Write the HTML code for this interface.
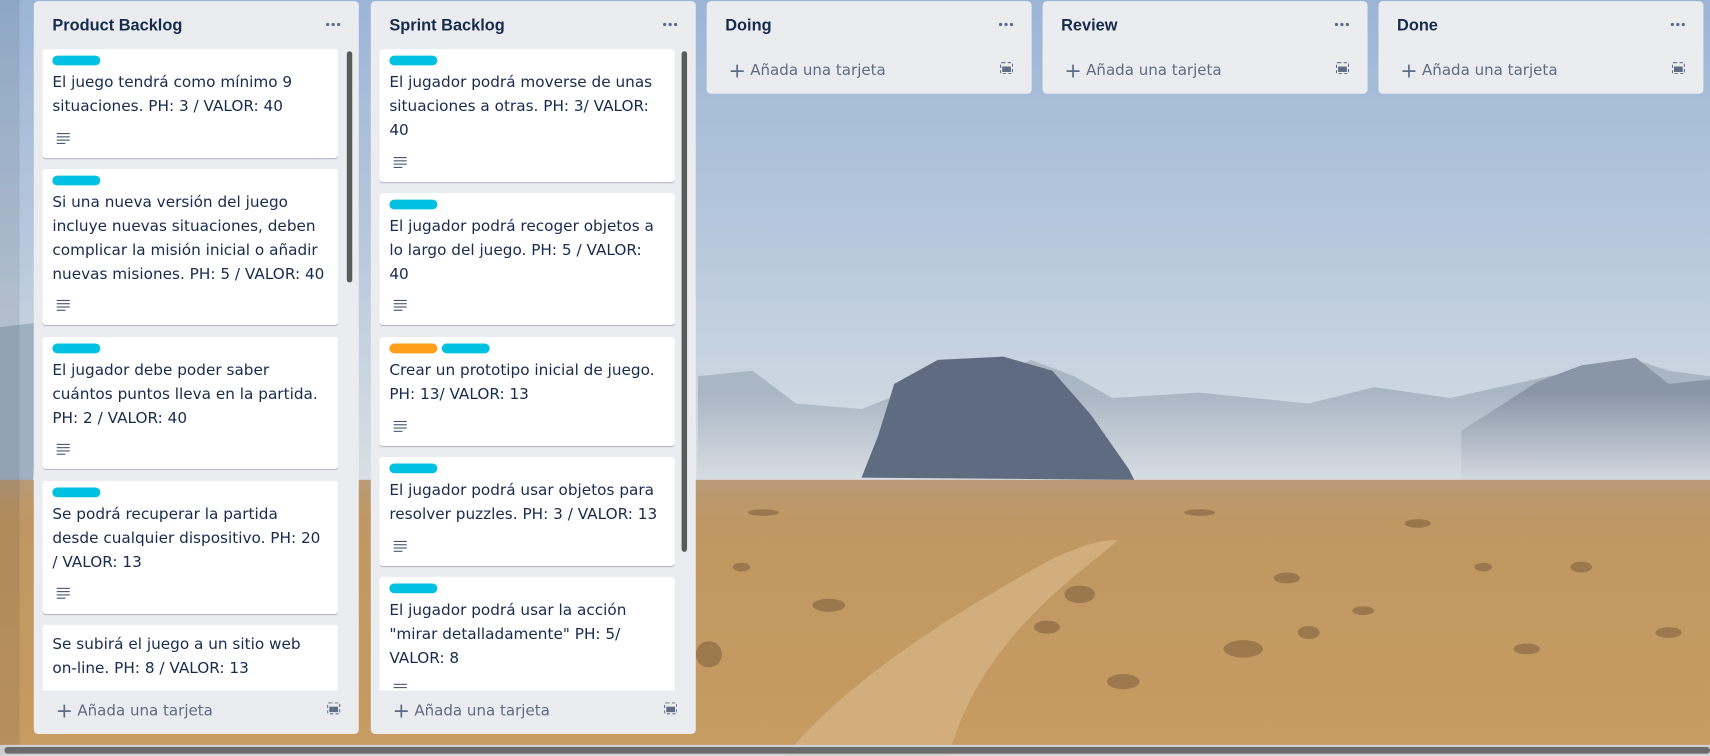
<!DOCTYPE html>
<html><head><meta charset="utf-8"><style>
html,body{margin:0;padding:0;width:1710px;height:756px;overflow:hidden;}
#w{position:absolute;left:0;top:0;width:1568px;height:693px;transform:scale(1.09056);transform-origin:0 0;overflow:hidden;font-family:"Liberation Sans","DejaVu Sans",sans-serif;}
.bg{position:absolute;inset:0;}
.list{position:absolute;top:1px;width:298px;background:#ebecf0;border-radius:4px;}
.hd{position:absolute;left:17px;top:14px;font-weight:bold;font-size:15px;color:#172b4d;}
.dots{position:absolute;right:15px;top:20px;width:15px;height:3px;}
.dots i{float:left;width:3px;height:3px;border-radius:50%;background:#5e6c84;margin-right:2px;}
.add{position:absolute;left:20px;font-family:"DejaVu Sans",sans-serif;font-size:13.8px;color:#5e6c84;}
.add b{font-weight:normal;font-size:19px;position:relative;top:2px;margin-right:4px;}
.tpl{position:absolute;right:17px;width:12px;height:11px;border:1.5px dashed #5e6c84;border-radius:2px;box-sizing:border-box;}
.tpl:after{content:"";position:absolute;left:1px;right:1px;top:3px;bottom:1px;background:#5e6c84;}
.card{position:absolute;left:8px;width:271px;background:#fff;border-radius:3px;box-shadow:0 1px 0 #091e4240;}
.lab{position:absolute;top:6px;height:9px;width:44px;border-radius:5px;background:#00c2e0;}
.tx{position:absolute;left:9px;font-family:"DejaVu Sans",sans-serif;font-size:14px;line-height:22px;color:#172b4d;white-space:nowrap;}
.ic{position:absolute;left:13px;width:12px;height:10px;}
.ic i{display:block;height:1px;background:#42526e;margin-bottom:2px;}
.ic i:last-child{width:8px;}
.clip{position:absolute;left:0;top:44px;width:298px;height:588px;overflow:hidden;}
.sb{position:absolute;width:5px;border-radius:3px;background:#5b5b5b;}
</style></head><body><div id="w">
<svg class="bg" width="1568" height="693" viewBox="0 0 1568 693">
<defs>
<linearGradient id="sky" x1="0" y1="0" x2="0" y2="1"><stop offset="0" stop-color="#9bb5d6"/><stop offset="0.5" stop-color="#b7c8dc"/><stop offset="1" stop-color="#d8dfe4"/></linearGradient>
<linearGradient id="gr" x1="0" y1="0" x2="0" y2="1"><stop offset="0" stop-color="#b89a78"/><stop offset="0.15" stop-color="#bf9762"/><stop offset="1" stop-color="#c79c62"/></linearGradient>
<linearGradient id="hz" x1="0" y1="0" x2="0" y2="1"><stop offset="0" stop-color="#dfe4e8" stop-opacity="0"/><stop offset="1" stop-color="#dfe4e8" stop-opacity="0.9"/></linearGradient>
</defs>
<rect width="1568" height="445" fill="url(#sky)"/>
<path d="M640 345 L690 340 L730 370 L790 375 L840 355 L880 365 L945 330 L985 345 L1020 365 L1100 360 L1200 370 L1260 355 L1330 365 L1420 345 L1500 330 L1530 340 L1568 345 L1568 445 L640 445Z" fill="#a9b6c4"/>
<path d="M1340 395 L1410 350 L1450 335 L1500 328 L1530 352 L1568 348 L1568 445 L1340 445Z" fill="#8996a8"/>
<rect x="640" y="360" width="928" height="85" fill="url(#hz)"/>
<path d="M790 438 L805 400 L820 352 L860 330 L920 327 L965 340 L1000 380 L1035 430 L1040 440 Z" fill="#5f6b80"/>
<path d="M0 300 L40 295 L30 445 L0 445Z" fill="#9fb0c3"/>
<rect y="440" width="1568" height="253" fill="url(#gr)"/>
<g fill="#6e5034" opacity="0.45">
<ellipse cx="700" cy="470" rx="14" ry="3"/><ellipse cx="1100" cy="470" rx="14" ry="3"/><ellipse cx="1300" cy="480" rx="12" ry="4"/><ellipse cx="1450" cy="520" rx="10" ry="5"/><ellipse cx="1180" cy="530" rx="12" ry="5"/><ellipse cx="990" cy="545" rx="14" ry="8"/><ellipse cx="1140" cy="595" rx="18" ry="8"/><ellipse cx="1030" cy="625" rx="15" ry="7"/><ellipse cx="760" cy="555" rx="15" ry="6"/><ellipse cx="1400" cy="595" rx="12" ry="5"/><ellipse cx="1530" cy="580" rx="12" ry="5"/><ellipse cx="650" cy="600" rx="12" ry="12"/><ellipse cx="1250" cy="560" rx="10" ry="4"/><ellipse cx="960" cy="575" rx="12" ry="6"/><ellipse cx="1200" cy="580" rx="10" ry="6"/><ellipse cx="1360" cy="520" rx="8" ry="4"/><ellipse cx="680" cy="520" rx="8" ry="4"/>
</g>
<path d="M720 693 C780 620 880 560 960 515 C990 500 1010 495 1025 495 C1000 520 900 580 870 693Z" fill="#d3ae7d"/>
<path d="M0 0 H18 V693 H0Z" fill="#000" opacity="0.08"/>
<rect y="683" width="1568" height="10" fill="#cfcfcf"/>
<rect x="4" y="685" width="1564" height="6" rx="3" fill="#6b6b6b"/>
</svg>

<div class="list" style="left:31px;height:672px;">
<div class="hd">Product Backlog</div><div class="dots"><i></i><i></i><i></i></div>
<div class="clip">
<div class="card" style="top:0;height:100px;"><div class="lab" style="left:9px"></div><div class="tx" style="top:20px">El juego tendrá como mínimo 9<br>situaciones. PH: 3 / VALOR: 40</div><div class="ic" style="top:77px"><i></i><i></i><i></i><i></i></div></div>
<div class="card" style="top:110px;height:143px;"><div class="lab" style="left:9px"></div><div class="tx" style="top:20px">Si una nueva versión del juego<br>incluye nuevas situaciones, deben<br>complicar la misión inicial o añadir<br>nuevas misiones. PH: 5 / VALOR: 40</div><div class="ic" style="top:120px"><i></i><i></i><i></i><i></i></div></div>
<div class="card" style="top:264px;height:121px;"><div class="lab" style="left:9px"></div><div class="tx" style="top:20px">El jugador debe poder saber<br>cuántos puntos lleva en la partida.<br>PH: 2 / VALOR: 40</div><div class="ic" style="top:98px"><i></i><i></i><i></i><i></i></div></div>
<div class="card" style="top:396px;height:122px;"><div class="lab" style="left:9px"></div><div class="tx" style="top:20px">Se podrá recuperar la partida<br>desde cualquier dispositivo. PH: 20<br>/ VALOR: 13</div><div class="ic" style="top:98px"><i></i><i></i><i></i><i></i></div></div>
<div class="card" style="top:528px;height:100px;"><div class="tx" style="top:7px">Se subirá el juego a un sitio web<br>on-line. PH: 8 / VALOR: 13</div></div>
</div>
<div class="sb" style="left:287px;top:46px;height:212px;"></div>
<div class="add" style="top:638px"><b>+</b>Añada una tarjeta</div><div class="tpl" style="top:643px"></div>
</div>

<div class="list" style="left:340px;height:672px;">
<div class="hd">Sprint Backlog</div><div class="dots"><i></i><i></i><i></i></div>
<div class="clip">
<div class="card" style="top:0;height:122px;"><div class="lab" style="left:9px"></div><div class="tx" style="top:20px">El jugador podrá moverse de unas<br>situaciones a otras. PH: 3/ VALOR:<br>40</div><div class="ic" style="top:99px"><i></i><i></i><i></i><i></i></div></div>
<div class="card" style="top:132px;height:121px;"><div class="lab" style="left:9px"></div><div class="tx" style="top:20px">El jugador podrá recoger objetos a<br>lo largo del juego. PH: 5 / VALOR:<br>40</div><div class="ic" style="top:98px"><i></i><i></i><i></i><i></i></div></div>
<div class="card" style="top:264px;height:100px;"><div class="lab" style="left:9px;background:#ff9f1a"></div><div class="lab" style="left:57px"></div><div class="tx" style="top:20px">Crear un prototipo inicial de juego.<br>PH: 13/ VALOR: 13</div><div class="ic" style="top:77px"><i></i><i></i><i></i><i></i></div></div>
<div class="card" style="top:374px;height:100px;"><div class="lab" style="left:9px"></div><div class="tx" style="top:20px">El jugador podrá usar objetos para<br>resolver puzzles. PH: 3 / VALOR: 13</div><div class="ic" style="top:77px"><i></i><i></i><i></i><i></i></div></div>
<div class="card" style="top:484px;height:120px;"><div class="lab" style="left:9px"></div><div class="tx" style="top:20px">El jugador podrá usar la acción<br>"mirar detalladamente" PH: 5/<br>VALOR: 8</div><div class="ic" style="top:98px"><i></i><i></i><i></i><i></i></div></div>
</div>
<div class="sb" style="left:285px;top:46px;height:459px;"></div>
<div class="add" style="top:638px"><b>+</b>Añada una tarjeta</div><div class="tpl" style="top:643px"></div>
</div>

<div class="list" style="left:648px;height:85px;"><div class="hd">Doing</div><div class="dots"><i></i><i></i><i></i></div><div class="add" style="top:51px"><b>+</b>Añada una tarjeta</div><div class="tpl" style="top:56px"></div></div>
<div class="list" style="left:956px;height:85px;"><div class="hd">Review</div><div class="dots"><i></i><i></i><i></i></div><div class="add" style="top:51px"><b>+</b>Añada una tarjeta</div><div class="tpl" style="top:56px"></div></div>
<div class="list" style="left:1264px;height:85px;"><div class="hd">Done</div><div class="dots"><i></i><i></i><i></i></div><div class="add" style="top:51px"><b>+</b>Añada una tarjeta</div><div class="tpl" style="top:56px"></div></div>
</div></body></html>
